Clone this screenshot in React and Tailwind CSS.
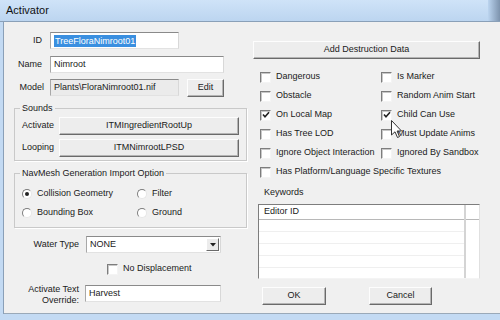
import React from "react";

const FONT = { fontFamily: '"Liberation Sans", Arial, sans-serif' };

function Btn({ className = "", children }) {
  return (
    <div
      className={
        "flex items-center justify-center bg-[#ededed] border border-t-[#fdfdfd] border-l-[#fdfdfd] border-b-[#6a6a6a] border-r-[#6a6a6a] shadow-[inset_-1px_-1px_0_#b4b4b4] text-[9px] text-[#1a1a1a] " +
        className
      }
    >
      {children}
    </div>
  );
}

function Input({ className = "", children, bg = "bg-white" }) {
  return (
    <div
      className={
        "flex items-center border border-t-[#8a8a8a] border-l-[#a8a8a8] border-b-[#e2e2e2] border-r-[#d8d8d8] text-[9px] text-[#1a1a1a] pl-[3px] " +
        bg +
        " " +
        className
      }
    >
      {children}
    </div>
  );
}

function Check({ checked }) {
  return (
    <div className="w-[11px] h-[11px] shrink-0 bg-white border border-t-[#7d7d7d] border-l-[#7d7d7d] border-b-[#f4f4f4] border-r-[#f4f4f4] shadow-[inset_1px_1px_0_#c8c8c8] flex items-center justify-center">
      {checked && (
        <svg width="8" height="8" viewBox="0 0 8 8">
          <path d="M1 3.5 L3 5.8 L7 1.2" fill="none" stroke="#222" strokeWidth="1.6" />
        </svg>
      )}
    </div>
  );
}

function CheckRow({ checked, label, w }) {
  return (
    <div className={"flex items-center h-[12px] " + (w || "")}>
      <Check checked={checked} />
      <span className="ml-[5px] text-[9px] text-[#1a1a1a] whitespace-nowrap">{label}</span>
    </div>
  );
}

function Radio({ checked, label, w }) {
  return (
    <div className={"flex items-center h-[12px] " + (w || "")}>
      <div className="w-[10px] h-[10px] shrink-0 rounded-full bg-white border border-t-[#7d7d7d] border-l-[#7d7d7d] border-b-[#e6e6e6] border-r-[#e6e6e6] flex items-center justify-center">
        {checked && <div className="w-[4px] h-[4px] rounded-full bg-[#222]" />}
      </div>
      <span className="ml-[5px] text-[9px] text-[#1a1a1a] whitespace-nowrap">{label}</span>
    </div>
  );
}

export default function App() {
  return (
    <div style={FONT} className="w-[500px] h-[320px] flex flex-col bg-[#c3daf3] overflow-hidden">
      {/* Title bar */}
      <div className="h-[22px] flex items-center justify-between bg-gradient-to-b from-[#cfe3f8] to-[#bcd5f0] border-b border-[#8aa0b8]">
        <span className="ml-[6px] text-[11px] text-[#111]">Activator</span>
        <div className="w-[12px] h-full bg-gradient-to-r from-[#bcd5f0] to-[#7d93ad]" />
      </div>
      <div className="flex-1 flex">
        <div className="w-[4px] bg-[#c3daf3] border-r border-[#8aa0b8]" />
        <div className="flex-1 flex bg-[#f0f0f0] border-b border-[#9aa9b8] relative">
          {/* Left column */}
          <div className="w-[245px] flex flex-col text-[9px] text-[#1a1a1a]">
            <div className="flex items-center h-[17px] mt-[10px]">
              <span className="w-[38px] text-right">ID</span>
              <Input className="ml-[8px] w-[129px] h-[17px] pl-[2px]">
                <span className="bg-[#3a8fe0] text-white px-[1px] leading-[12px]">TreeFloraNimroot01</span>
              </Input>
            </div>
            <div className="flex items-center h-[17px] mt-[7px]">
              <span className="w-[38px] text-right">Name</span>
              <Input className="ml-[8px] w-[174px] h-[17px]">Nimroot</Input>
            </div>
            <div className="flex items-center h-[17px] mt-[6px]">
              <span className="w-[40px] text-right">Model</span>
              <Input bg="bg-[#ebebeb]" className="ml-[6px] w-[129px] h-[17px]">
                Plants\FloraNimroot01.nif
              </Input>
              <Btn className="ml-[8px] w-[37px] h-[18px]">Edit</Btn>
            </div>

            <fieldset className="ml-[10px] mt-[7px] w-[233px] border border-[#c9c9c9] shadow-[1px_1px_0_#fff] pl-[7px] pb-[3px]">
              <legend className="ml-[-2px] px-[2px] leading-[11px]">Sounds</legend>
              <div className="flex items-center h-[18px] mt-[3px]">
                <span className="w-[37px]">Activate</span>
                <Btn className="w-[180px] h-[18px]">ITMIngredientRootUp</Btn>
              </div>
              <div className="flex items-center h-[18px] mt-[4px]">
                <span className="w-[37px]">Looping</span>
                <Btn className="w-[180px] h-[18px]">ITMNimrootLPSD</Btn>
              </div>
            </fieldset>

            <fieldset className="ml-[10px] mt-[7px] w-[233px] border border-[#c9c9c9] shadow-[1px_1px_0_#fff] pl-[7px] pb-[8px]">
              <legend className="ml-[-2px] px-[2px] leading-[11px]">NavMesh Generation Import Option</legend>
              <div className="flex mt-[9px]">
                <Radio checked label="Collision Geometry" w="w-[115px]" />
                <Radio label="Filter" />
              </div>
              <div className="flex mt-[7px]">
                <Radio label="Bounding Box" w="w-[115px]" />
                <Radio label="Ground" />
              </div>
            </fieldset>

            <div className="flex items-center h-[17px] mt-[8px]">
              <span className="w-[75px] text-right">Water Type</span>
              <Input className="ml-[7px] w-[135px] h-[17px] justify-between pr-[1px]">
                <span>NONE</span>
                <div className="w-[13px] h-[13px] bg-[#ececec] border border-t-[#fff] border-l-[#fff] border-b-[#6a6a6a] border-r-[#6a6a6a] flex items-center justify-center">
                  <svg width="6" height="4" viewBox="0 0 6 4">
                    <path d="M0 0 H6 L3 3.5 Z" fill="#222" />
                  </svg>
                </div>
              </Input>
            </div>
            <div className="flex items-center h-[12px] mt-[10px] ml-[103px]">
              <CheckRow label="No Displacement" />
            </div>
            <div className="flex items-center h-[17px] mt-[10px]">
              <span className="w-[75px] text-right leading-[11px] mt-[3px]">
                Activate Text
                <br />
                Override:
              </span>
              <Input className="ml-[6px] w-[136px] h-[17px]">Harvest</Input>
            </div>
          </div>

          {/* Right column */}
          <div className="flex-1 flex flex-col text-[9px] text-[#1a1a1a]">
            <Btn className="mt-[19px] ml-[4px] w-[227px] h-[18px]">Add Destruction Data</Btn>
            <div className="ml-[11px] mt-[12px] flex flex-col gap-[7px]">
              <div className="flex">
                <CheckRow label="Dangerous" w="w-[121px]" />
                <CheckRow label="Is Marker" />
              </div>
              <div className="flex">
                <CheckRow label="Obstacle" w="w-[121px]" />
                <CheckRow label="Random Anim Start" />
              </div>
              <div className="flex">
                <CheckRow checked label="On Local Map" w="w-[121px]" />
                <CheckRow checked label="Child Can Use" />
              </div>
              <div className="flex">
                <CheckRow label="Has Tree LOD" w="w-[121px]" />
                <CheckRow label="Must Update Anims" />
              </div>
              <div className="flex">
                <CheckRow label="Ignore Object Interaction" w="w-[121px]" />
                <CheckRow label="Ignored By Sandbox" />
              </div>
              <div className="flex">
                <CheckRow label="Has Platform/Language Specific Textures" />
              </div>
            </div>
            <span className="ml-[15px] mt-[9px] leading-[11px]">Keywords</span>
            <div className="ml-[9px] mt-[6px] w-[222px] h-[75px] bg-white border border-t-[#7d7d7d] border-l-[#7d7d7d] border-b-[#f4f4f4] border-r-[#e0e0e0] flex overflow-hidden">
              <div className="w-[205px] flex flex-col">
                <div className="h-[15px] flex items-center pl-[5px] border-b border-[#b8b8b8] shrink-0">Editor ID</div>
                <div className="h-[12px] border-b border-[#efefef]" />
                <div className="h-[12px] border-b border-[#efefef]" />
                <div className="h-[12px] border-b border-[#efefef]" />
                <div className="h-[12px] border-b border-[#efefef]" />
              </div>
              <div className="w-[2px] border-l border-r border-[#d4d4d4]" />
              <div className="flex-1 flex flex-col">
                <div className="h-[15px] border-b border-[#b8b8b8] shrink-0" />
              </div>
            </div>
            <div className="flex mt-[8px] ml-[13px]">
              <Btn className="w-[64px] h-[18px]">OK</Btn>
              <Btn className="ml-[43px] w-[63px] h-[18px]">Cancel</Btn>
            </div>
          </div>

          {/* Mouse cursor */}
          <svg
            className="absolute left-[387px] top-[98px]"
            width="12"
            height="19"
            viewBox="0 0 12 19"
          >
            <path
              d="M0.5 0.5 L0.5 15 L4 11.8 L6.5 17.5 L8.5 16.6 L6.1 11 L10.5 11 Z"
              fill="#fff"
              stroke="#333"
              strokeWidth="1"
              strokeLinejoin="round"
            />
          </svg>
        </div>
      </div>
      <div className="h-[6px] bg-[#c3daf3]" />
    </div>
  );
}
